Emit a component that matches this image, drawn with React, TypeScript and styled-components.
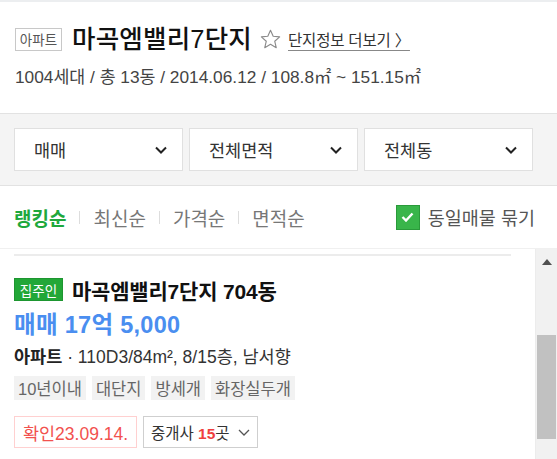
import React from "react";
import styled, { createGlobalStyle } from "styled-components";

const Global = createGlobalStyle`
  html, body { margin: 0; padding: 0; background: #fff; }
  body { font-family: "Liberation Sans", "Noto Sans CJK KR", sans-serif; color: #222; }
  * { box-sizing: border-box; }
`;

const Page = styled.div`
  width: 557px;
  height: 459px;
  overflow: hidden;
  display: flex;
  flex-direction: column;
  border-top: 2px solid #eceef0;
`;

const Header = styled.div`
  padding: 24px 15px 0 15px;
  height: 111px;
`;

const TitleRow = styled.div`
  display: flex;
  align-items: center;
  height: 26px;
`;

const TypeBadge = styled.span`
  display: inline-flex;
  align-items: center;
  justify-content: center;
  width: 47px;
  height: 23px;
  border: 1px solid #c8c8c8;
  font-size: 13.5px;
  color: #555;
  margin-right: 10px;
`;

const Title = styled.h1`
  margin: 0;
  font-size: 25.5px;
  font-weight: 500;
  letter-spacing: 0.2px;
  color: #111;
  line-height: 26px;
`;

const StarBtn = styled.span`
  display: inline-flex;
  margin-left: 8px;
  margin-right: 7px;
`;

const MoreLink = styled.a`
  font-size: 15.5px;
  color: #333;
  text-decoration: underline;
  text-underline-offset: 4px;
  text-decoration-color: #888;
  letter-spacing: -0.2px;
`;

const SubLine = styled.div`
  margin-top: 11px;
  font-size: 17.3px;
  color: #444;
`;

const FilterBar = styled.div`
  display: flex;
  gap: 6px;
  padding: 14px 14px;
  background: #f4f4f4;
  border-top: 1px solid #e2e2e2;
  border-bottom: 1px solid #e2e2e2;
`;

const Select = styled.div`
  width: 169px;
  height: 43px;
  background: #fff;
  border: 1px solid #e0e0e0;
  display: flex;
  align-items: center;
  justify-content: space-between;
  padding: 0 15px 0 19px;
  font-size: 17.5px;
  color: #333;
`;

const SortBar = styled.div`
  display: flex;
  align-items: center;
  justify-content: space-between;
  height: 62px;
  padding: 0 22px 0 14px;
`;

const SortList = styled.div`
  display: flex;
  align-items: center;
`;

const SortItem = styled.span<{ $active?: boolean }>`
  font-size: 19px;
  color: ${(p) => (p.$active ? "#1ea83c" : "#777")};
  font-weight: ${(p) => (p.$active ? 700 : 400)};
`;

const Divider = styled.span`
  width: 1px;
  height: 13px;
  background: #ddd;
  margin: 0 13px;
`;

const CheckWrap = styled.label`
  display: flex;
  align-items: center;
  gap: 8px;
  font-size: 18.5px;
  color: #555;
`;

const CheckBox = styled.span`
  width: 24px;
  height: 25px;
  background: #39b54a;
  border: 1px solid #2a9a3a;
  display: flex;
  align-items: center;
  justify-content: center;
`;

const ScrollArea = styled.div`
  flex: 1;
  display: flex;
  border-top: 1px solid #f0f0f0;
  min-height: 0;
`;

const List = styled.div`
  flex: 1;
  padding: 5px 24px 0 14px;
`;

const Card = styled.div`
  border-top: 2px solid #ececec;
  padding-top: 22px;
`;

const CardTitleRow = styled.div`
  display: flex;
  align-items: center;
  height: 23px;
`;

const OwnerBadge = styled.span`
  display: inline-flex;
  align-items: center;
  justify-content: center;
  width: 49px;
  height: 23px;
  background: #22a737;
  border: 1px solid #1d9630;
  color: #fff;
  font-size: 13.5px;
  margin-right: 9px;
`;

const CardTitle = styled.div`
  font-size: 21px;
  font-weight: 700;
  color: #111;
  letter-spacing: -0.2px;
`;

const Price = styled.div`
  margin-top: 11px;
  font-size: 23.5px;
  font-weight: 700;
  color: #4a8ef0;
  letter-spacing: 0.3px;
  line-height: 26px;
`;

const Info = styled.div`
  margin-top: 8px;
  font-size: 17.5px;
  color: #333;
  line-height: 22px;
  b { font-weight: 700; color: #222; }
`;

const Tags = styled.div`
  display: flex;
  gap: 6px;
  margin-top: 8px;
`;

const Tag = styled.span`
  height: 24px;
  padding: 0 4px;
  display: inline-flex;
  align-items: center;
  background: #f2f2f2;
  color: #666;
  font-size: 16.5px;
`;

const Bottom = styled.div`
  display: flex;
  gap: 6px;
  margin-top: 16px;
`;

const Confirm = styled.span`
  height: 32px;
  width: 123px;
  display: inline-flex;
  align-items: center;
  justify-content: center;
  border: 1px solid #ffd0d0;
  color: #f2514e;
  font-size: 17.5px;
`;

const Agent = styled.span`
  height: 32px;
  padding: 0 7px 0 7px;
  display: inline-flex;
  align-items: center;
  gap: 8px;
  border: 1px solid #cfcfcf;
  color: #333;
  font-size: 15.5px;
  b { color: #f03e3e; font-weight: 700; }
`;

const Scrollbar = styled.div`
  width: 22px;
  background: #f1f1f1;
  border-left: 1px solid #ececec;
  display: flex;
  flex-direction: column;
  align-items: center;
`;

const ScrollUp = styled.div`
  height: 26px;
  display: flex;
  align-items: center;
  justify-content: center;
`;

const Thumb = styled.div`
  margin-top: 60px;
  width: 19px;
  height: 104px;
  background: #c1c1c1;
`;

const Chevron = () => (
  <svg width="12" height="8" viewBox="0 0 12 8">
    <path d="M1 1.5l5 5 5-5" fill="none" stroke="#222" strokeWidth="2" />
  </svg>
);

const Star = () => (
  <svg width="21" height="20" viewBox="0 0 24 23">
    <path
      d="M12 1.5l3.1 6.9 7.4.7-5.6 5 1.7 7.4L12 17.6l-6.6 3.9 1.7-7.4-5.6-5 7.4-.7z"
      fill="none"
      stroke="#8a8a8a"
      strokeWidth="1.3"
      strokeLinejoin="round"
    />
  </svg>
);

export default function App() {
  return (
    <>
      <Global />
      <Page>
        <Header>
          <TitleRow>
            <TypeBadge>아파트</TypeBadge>
            <Title>마곡엠밸리7단지</Title>
            <StarBtn>
              <Star />
            </StarBtn>
            <MoreLink>단지정보 더보기 〉</MoreLink>
          </TitleRow>
          <SubLine>1004세대 / 총 13동 / 2014.06.12 / 108.8㎡ ~ 151.15㎡</SubLine>
        </Header>
        <FilterBar>
          <Select>
            매매
            <Chevron />
          </Select>
          <Select>
            전체면적
            <Chevron />
          </Select>
          <Select>
            전체동
            <Chevron />
          </Select>
        </FilterBar>
        <SortBar>
          <SortList>
            <SortItem $active>랭킹순</SortItem>
            <Divider />
            <SortItem>최신순</SortItem>
            <Divider />
            <SortItem>가격순</SortItem>
            <Divider />
            <SortItem>면적순</SortItem>
          </SortList>
          <CheckWrap>
            <CheckBox>
              <svg width="13" height="10" viewBox="0 0 13 10">
                <path d="M1.5 5l3.5 3.5L11.5 1.5" fill="none" stroke="#fff" strokeWidth="2.4" />
              </svg>
            </CheckBox>
            동일매물 묶기
          </CheckWrap>
        </SortBar>
        <ScrollArea>
          <List>
            <Card>
              <CardTitleRow>
                <OwnerBadge>집주인</OwnerBadge>
                <CardTitle>마곡엠밸리7단지 704동</CardTitle>
              </CardTitleRow>
              <Price>매매 17억 5,000</Price>
              <Info>
                <b>아파트</b> · 110D3/84m², 8/15층, 남서향
              </Info>
              <Tags>
                <Tag>10년이내</Tag>
                <Tag>대단지</Tag>
                <Tag>방세개</Tag>
                <Tag>화장실두개</Tag>
              </Tags>
              <Bottom>
                <Confirm>확인23.09.14.</Confirm>
                <Agent>
                  <span>
                    중개사 <b>15</b>곳
                  </span>
                  <svg width="12" height="7" viewBox="0 0 12 7">
                    <path d="M1 1l5 5 5-5" fill="none" stroke="#555" strokeWidth="1.3" />
                  </svg>
                </Agent>
              </Bottom>
            </Card>
          </List>
          <Scrollbar>
            <ScrollUp>
              <svg width="10" height="6" viewBox="0 0 10 6">
                <path d="M5 0L10 6H0z" fill="#505050" />
              </svg>
            </ScrollUp>
            <Thumb />
          </Scrollbar>
        </ScrollArea>
      </Page>
    </>
  );
}
